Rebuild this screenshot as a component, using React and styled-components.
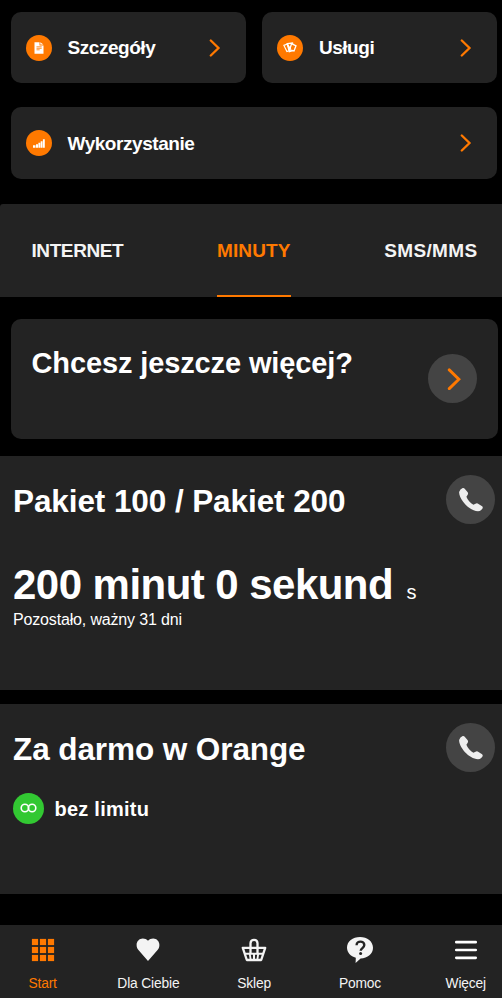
import React from 'react'
import styled, { createGlobalStyle } from 'styled-components'

const ORANGE = '#ff7900'
const PANEL = '#232323'
const LIGHT = '#f4f4f4'

const GlobalStyle = createGlobalStyle`
  * {
    box-sizing: border-box;
  }
  body {
    margin: 0;
    background: #000;
    color: #fff;
    font-family: 'Liberation Sans', Arial, sans-serif;
    overflow: hidden;
  }
`
const Screen = styled.div`
  display: flex;
  flex-direction: column;
  width: 502px;
  height: 998px;
  background: #000;
`
const Shortcuts = styled.div`
  display: grid;
  grid-template-columns: 235px 235px;
  gap: 23.8px 16.4px;
  padding: 11.7px 4.6px 0 11px;
`
const ShortcutCard = styled.div`
  display: flex;
  align-items: center;
  grid-column: ${props => (props.$wide ? 'span 2' : 'auto')};
  height: 71.8px;
  padding: 0 25px 0 15px;
  border-radius: 10px;
  background: ${PANEL};
`
const ShortcutIcon = styled.div`
  display: flex;
  align-items: center;
  justify-content: center;
  width: 26px;
  height: 26px;
  margin-right: 15.5px;
  border-radius: 50%;
  background: ${ORANGE};
`
const ShortcutLabel = styled.span`
  flex: 1;
  padding-top: 1px;
  font-size: 19px;
  font-weight: bold;
  line-height: 24px;
  letter-spacing: -0.45px;
`
const Tabs = styled.div`
  display: flex;
  justify-content: space-between;
  height: 92.7px;
  margin-top: 24.9px;
  padding: 0 24.5px 0 31.4px;
  border-top-left-radius: 3px;
  background: ${PANEL};
`
const Tab = styled.div`
  display: flex;
  align-items: center;
  padding-top: 4px;
  border-bottom: 2.4px solid ${props => (props.$active ? ORANGE : 'transparent')};
  color: ${props => (props.$active ? ORANGE : LIGHT)};
  font-size: 19px;
  font-weight: bold;
  letter-spacing: ${props => props.$spacing}px;
`
const Promo = styled.div`
  display: flex;
  align-items: center;
  justify-content: space-between;
  height: 120px;
  margin: 22.3px 4.5px 0 11px;
  padding: 0 20.5px;
  border-radius: 10px;
  background: ${PANEL};
`
const PromoTitle = styled.h2`
  align-self: flex-start;
  margin: 26px 0 0;
  font-size: 29px;
  line-height: 36px;
  letter-spacing: -0.12px;
`
const RoundButton = styled.div`
  display: flex;
  flex: none;
  align-items: center;
  justify-content: center;
  width: 49px;
  height: 49px;
  border-radius: 50%;
  background: #444;
`
const PromoButton = styled(RoundButton)`
  padding-left: 3px;
`
const Package = styled.section`
  height: ${props => props.$height}px;
  margin-top: ${props => props.$gap}px;
  padding: 19.5px 7px 0 13px;
  background: ${PANEL};
`
const PackageHeader = styled.div`
  display: flex;
  align-items: center;
  justify-content: space-between;
`
const PackageTitle = styled.h2`
  margin: 2px 0 0;
  font-size: 31.5px;
  line-height: 40px;
  letter-spacing: -0.09px;
`
const Amount = styled.div`
  display: flex;
  align-items: baseline;
  gap: 13.5px;
  margin-top: 35.5px;
  font-size: 42px;
  font-weight: bold;
  line-height: 50px;
  letter-spacing: -0.54px;
`
const Unit = styled.span`
  font-size: 20px;
  font-weight: normal;
`
const Validity = styled.div`
  margin-top: -7px;
  font-size: 16px;
  line-height: 20px;
  letter-spacing: -0.16px;
`
const Unlimited = styled.div`
  display: flex;
  align-items: center;
  gap: 10.5px;
  margin-top: 20.5px;
  font-size: 20px;
  font-weight: bold;
  line-height: 24px;
  letter-spacing: 0.24px;
`
const UnlimitedText = styled.span`
  padding-top: 2px;
`
const UnlimitedBadge = styled.div`
  display: flex;
  align-items: center;
  justify-content: center;
  width: 31px;
  height: 31px;
  border-radius: 50%;
  background: #32c832;
`
const BottomNav = styled.nav`
  display: grid;
  grid-template-columns: repeat(5, 105.8px);
  justify-content: center;
  height: 73.5px;
  margin-top: auto;
  padding-left: 6.4px;
  background: ${PANEL};
`
const NavItem = styled.div`
  display: flex;
  flex-direction: column;
  align-items: center;
  padding-top: 11.5px;
  color: ${props => (props.$active ? ORANGE : LIGHT)};
  font-size: 13.8px;
  line-height: 18px;
  letter-spacing: -0.15px;
`
const NavLabel = styled.span`
  margin-top: 11px;
`

const Chevron = ({ width, height }) => (
  <svg width={width} height={height} viewBox="0 0 12 18" fill="none">
    <path d="M1.8 1.5 9.5 9l-7.7 7.5" stroke={ORANGE} strokeWidth="2.3" strokeLinecap="round" />
  </svg>
)

const DocumentIcon = () => (
  <svg width="10" height="12" viewBox="0 0 10 12">
    <path d="M.5.2h5v3.2h4v8.3h-9z" fill="#fff" />
    <path d="M6.3.2 9.4 2.6H6.3z" fill="#fff" />
    <path d="M2.5 4.8h5.2M2.5 6.3h5.2M2.5 7.8h3.2" stroke={ORANGE} strokeWidth=".8" />
  </svg>
)

const CardsIcon = () => (
  <svg width="14" height="12" viewBox="0 0 14 12" fill="none" stroke="#fff">
    <path d="M.9 3.4 4.5 2l2.5 6.5L3.9 9.6z" strokeWidth="1.2" />
    <path d="M4.2 1.6 9.5 1l.6 7.6-3.8 1z" strokeWidth="1.3" />
    <path d="m8.6 1.6 4.4 2.2-2 5.2-4.4-1.2z" strokeWidth="1.3" fill={ORANGE} />
    <path d="m4.4 2.8 3.2 4.4" strokeWidth="1.5" />
  </svg>
)

const UsageIcon = () => (
  <svg width="12" height="9" viewBox="0 0 12 9" fill="#fff">
    <path d="M0 6.3h2.5v2.5H0zM3 5.2h2v3.6H3zM5.4 3.8h1.9v5H5.4zM7.7 2.2h1.8v6.6H7.7zM9.9.3h1.9v8.5H9.9z" />
  </svg>
)

const PhoneIcon = () => (
  <svg width="26" height="26" viewBox="0 0 26 26">
    <path
      d="M4.7 1Q2 1.8 1.1 5C.8 12 11 24 20 24.2c2.5 0 3.8-1.5 4.6-3q.5-1.2-.5-2l-3.6-2.3q-1.5-1-3-.2l-2.1 1.1c-3-1.5-6-5-7-8l1.3-2q.8-1.200 0-2.500L6.700 1.800q-.8-1.200-2-.8z"
      fill="#eee"
    />
  </svg>
)

const InfinityIcon = () => (
  <svg width="17" height="10" viewBox="0 0 17 10" fill="none" stroke="#fff" strokeWidth="1.6">
    <circle cx="4.9" cy="5" r="3.7" />
    <circle cx="12.1" cy="5" r="3.7" />
  </svg>
)

const GridIcon = () => (
  <svg width="28" height="28" viewBox="0 0 28 28" fill={ORANGE}>
    {[2.9, 10.9, 18.9].map(y =>
      [2.9, 10.9, 18.9].map(x => <rect key={`${x}-${y}`} x={x} y={y} width="6.2" height="6.2" />)
    )}
  </svg>
)

const HeartIcon = () => (
  <svg width="28" height="28" viewBox="0 0 28 28" fill={LIGHT}>
    <path d="M14 4.8C12.6 3.4 10.8 2.6 8.8 2.6 5.3 2.6 2.6 5.5 2.6 9c0 2.5.9 4 2.5 5.800L14 25l8.900-10.200c1.600-1.800 2.500-3.300 2.500-5.800 0-3.500-2.700-6.400-6.200-6.400-2 0-3.800.8-5.200 2.200z" />
  </svg>
)

const BasketIcon = () => (
  <svg width="28" height="28" viewBox="0 0 28 28" fill="none" stroke={LIGHT} strokeWidth="2.3" strokeLinejoin="round">
    <path d="M2.8 11.800h22.400l-4 12.200H6.800z" />
    <path d="M4.600 17.800h18.800M14 17.500V24" strokeWidth="2" />
    <path d="m9.800 18 .9 6M18.200 18l-.9 6" strokeWidth="1.800" />
    <path d="M10.500 17V7.300c0-4.700 7-4.700 7 0V17" />
  </svg>
)

const HelpIcon = () => (
  <svg width="28" height="28" viewBox="0 0 28 28" fill="none">
    <path
      d="M14 1C6.7 1 1 5.5 1 11.6c0 5 3.6 8.8 8.8 10.2L9.6 27l5-4.6C21.7 22.2 27 17.7 27 11.7 27 5.5 21.3 1 14 1z"
      fill={LIGHT}
    />
    <path d="M10.6 9.2c0-4.8 7.7-4.6 7.7-.2 0 3.1-3.6 3-3.6 5.8" stroke={PANEL} strokeWidth="2.4" />
    <circle cx="14.6" cy="17.6" r="1.5" fill={PANEL} />
  </svg>
)

const MenuIcon = () => (
  <svg width="28" height="28" viewBox="0 0 28 28" stroke="#fff" strokeWidth="2.7" strokeLinecap="round">
    <path d="M4.3 6.2h19.4M4.3 14h19.4M4.3 21.8h19.4" />
  </svg>
)

const shortcuts = [
  { label: 'Szczegóły', icon: <DocumentIcon /> },
  { label: 'Usługi', icon: <CardsIcon /> },
  { label: 'Wykorzystanie', icon: <UsageIcon />, wide: true }
]

const tabs = [
  { label: 'INTERNET', spacing: -0.38 },
  { label: 'MINUTY', spacing: 0.15, active: true },
  { label: 'SMS/MMS', spacing: 0.35 }
]

const navItems = [
  { label: 'Start', icon: <GridIcon />, active: true },
  { label: 'Dla Ciebie', icon: <HeartIcon /> },
  { label: 'Sklep', icon: <BasketIcon /> },
  { label: 'Pomoc', icon: <HelpIcon /> },
  { label: 'Więcej', icon: <MenuIcon /> }
]

const App = () => (
  <Screen>
    <GlobalStyle />
    <Shortcuts>
      {shortcuts.map(item => (
        <ShortcutCard key={item.label} $wide={item.wide}>
          <ShortcutIcon>{item.icon}</ShortcutIcon>
          <ShortcutLabel>{item.label}</ShortcutLabel>
          <Chevron width={12} height={18} />
        </ShortcutCard>
      ))}
    </Shortcuts>

    <Tabs>
      {tabs.map(tab => (
        <Tab key={tab.label} $active={tab.active} $spacing={tab.spacing}>
          {tab.label}
        </Tab>
      ))}
    </Tabs>

    <Promo>
      <PromoTitle>Chcesz jeszcze więcej?</PromoTitle>
      <PromoButton>
        <Chevron width={15} height={22.5} />
      </PromoButton>
    </Promo>

    <Package $height={234} $gap={17}>
      <PackageHeader>
        <PackageTitle>Pakiet 100 / Pakiet 200</PackageTitle>
        <RoundButton>
          <PhoneIcon />
        </RoundButton>
      </PackageHeader>
      <Amount>
        200 minut 0 sekund
        <Unit>s</Unit>
      </Amount>
      <Validity>Pozostało, ważny 31 dni</Validity>
    </Package>

    <Package $height={190.5} $gap={14}>
      <PackageHeader>
        <PackageTitle>Za darmo w Orange</PackageTitle>
        <RoundButton>
          <PhoneIcon />
        </RoundButton>
      </PackageHeader>
      <Unlimited>
        <UnlimitedBadge>
          <InfinityIcon />
        </UnlimitedBadge>
        <UnlimitedText>bez limitu</UnlimitedText>
      </Unlimited>
    </Package>

    <BottomNav>
      {navItems.map(item => (
        <NavItem key={item.label} $active={item.active}>
          {item.icon}
          <NavLabel>{item.label}</NavLabel>
        </NavItem>
      ))}
    </BottomNav>
  </Screen>
)

export default App
